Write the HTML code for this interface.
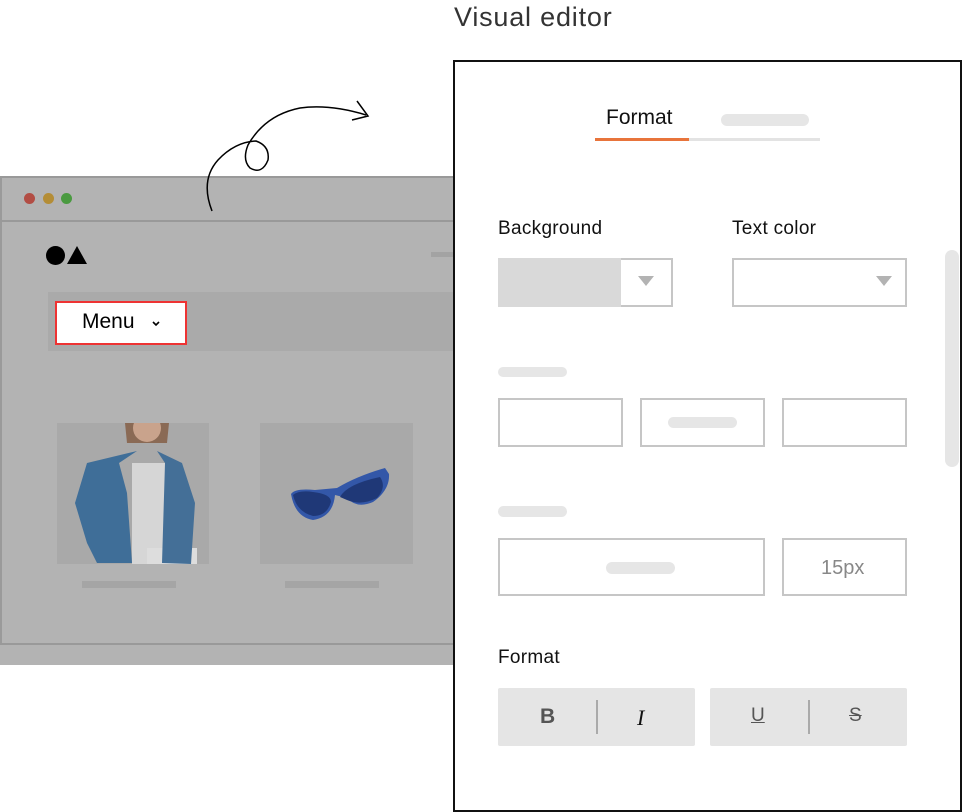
<!DOCTYPE html>
<html><head><style>
body{margin:0;width:962px;height:810px;background:#fff;position:relative;overflow:hidden;font-family:"Liberation Sans",sans-serif;}
.a{position:absolute;box-sizing:border-box;}
.pill{position:absolute;background:#e6e6e6;border-radius:6px;}
.box{position:absolute;box-sizing:border-box;border:2px solid #c6c6c6;background:#fff;}
.lbl{position:absolute;font-size:19px;color:#111;letter-spacing:0.3px;}
</style></head><body>
<!-- browser -->
<div class="a" style="left:0;top:176px;width:456px;height:489px;background:#b3b3b3;"></div>
<div class="a" style="left:0;top:176px;width:456px;height:2px;background:#999;"></div>
<div class="a" style="left:0;top:176px;width:2px;height:469px;background:#9a9a9a;"></div>
<div class="a" style="left:0;top:220px;width:456px;height:2px;background:#999;"></div>
<div class="a" style="left:0;top:643px;width:456px;height:2px;background:#999;"></div>
<div class="a" style="left:24px;top:193px;width:11px;height:11px;border-radius:50%;background:#b24d44;"></div>
<div class="a" style="left:43px;top:193px;width:11px;height:11px;border-radius:50%;background:#b48d36;"></div>
<div class="a" style="left:61px;top:193px;width:11px;height:11px;border-radius:50%;background:#4a9a40;"></div>
<div class="a" style="left:46px;top:246px;width:19px;height:19px;border-radius:50%;background:#000;"></div>
<div class="a" style="left:67px;top:246px;width:0;height:0;border-left:10px solid transparent;border-right:10px solid transparent;border-bottom:18px solid #000;"></div>
<div class="a" style="left:431px;top:252px;width:25px;height:5px;background:#a3a3a3;"></div>
<div class="a" style="left:48px;top:292px;width:408px;height:59px;background:#aaa;"></div>
<div class="a" style="left:55px;top:301px;width:132px;height:44px;background:#fff;border:2px solid #e33;"></div>
<div class="a" style="left:82px;top:310px;font-size:21px;color:#000;">Menu</div>
<svg class="a" style="left:150px;top:318px" width="12" height="10"><path d="M3 4 L6 7 L9 4" stroke="#000" stroke-width="1.6" fill="none"/></svg>
<div class="a" style="left:57px;top:423px;width:152px;height:141px;background:#a9a9a9;overflow:hidden;">
<svg width="152" height="141"><path d="M68 0 L70 20 L110 20 L112 0Z" fill="#8a6a55"/><ellipse cx="90" cy="5" rx="14" ry="14" fill="#c9a38c"/><rect x="75" y="40" width="40" height="101" fill="#d6d6d6"/><rect x="90" y="125" width="50" height="16" fill="#ddd"/><path d="M75 140 L70 70 L62 40 L80 28 L30 40 L18 80 L30 120 L40 140 Z" fill="#3f6e98"/><path d="M105 140 L108 40 L100 28 L125 40 L138 80 L134 141 Z" fill="#446f97"/></svg></div>
<div class="a" style="left:260px;top:423px;width:153px;height:141px;background:#a9a9a9;"></div>
<svg class="a" style="left:285px;top:462px" width="110" height="60"><path d="M6 32 Q10 26 30 28 L52 26 Q72 14 100 6 L104 12 Q105 28 88 40 Q72 47 62 36 L50 33 Q48 55 28 58 Q10 55 6 32Z" fill="#3357a8"/><path d="M8 33 Q14 28 28 30 Q46 32 46 40 Q42 54 28 54 Q12 50 8 33Z" fill="#1f3877"/><path d="M55 35 Q62 22 95 15 Q102 25 92 36 Q76 44 62 38Z" fill="#1f3877"/></svg>
<div class="a" style="left:82px;top:581px;width:94px;height:7px;background:#a5a5a5;"></div>
<div class="a" style="left:285px;top:581px;width:94px;height:7px;background:#a5a5a5;"></div>
<!-- arrow -->
<svg class="a" style="left:0;top:0" width="400" height="230"><path d="M212 211 Q200 180 218 160 Q235 142 256 141 Q270 146 268 160 Q262 175 250 168 Q242 160 248 145 Q265 115 300 108 Q330 104 366 115" stroke="#000" stroke-width="1.5" fill="none"/><path d="M357 101 L368 116 L352 120" stroke="#000" stroke-width="1.5" fill="none"/></svg>
<!-- panel -->
<div class="a" style="left:454px;top:2px;font-size:27px;color:#333;letter-spacing:0.8px;">Visual editor</div>
<div class="a" style="left:453px;top:60px;width:509px;height:752px;border:2px solid #111;background:#fff;"></div>
<div class="a" style="left:606px;top:106px;font-size:21px;color:#111;">Format</div>
<div class="pill" style="left:721px;top:114px;width:88px;height:12px;"></div>
<div class="a" style="left:595px;top:138px;width:94px;height:3px;background:#e8743b;"></div>
<div class="a" style="left:689px;top:138px;width:131px;height:3px;background:#e3e3e3;"></div>
<div class="lbl" style="left:498px;top:218px;">Background</div>
<div class="lbl" style="left:732px;top:218px;">Text color</div>
<div class="box" style="left:498px;top:258px;width:175px;height:49px;"></div>
<div class="a" style="left:498px;top:258px;width:123px;height:49px;background:#d9d9d9;"></div>
<div class="a" style="left:638px;top:276px;border-left:8px solid transparent;border-right:8px solid transparent;border-top:10px solid #b3b3b3;"></div>
<div class="box" style="left:732px;top:258px;width:175px;height:49px;"></div>
<div class="a" style="left:876px;top:276px;border-left:8px solid transparent;border-right:8px solid transparent;border-top:10px solid #b3b3b3;"></div>
<div class="a" style="left:945px;top:250px;width:14px;height:217px;background:#e6e6e6;border-radius:7px;"></div>
<div class="pill" style="left:498px;top:367px;width:69px;height:10px;"></div>
<div class="box" style="left:498px;top:398px;width:125px;height:49px;"></div>
<div class="box" style="left:640px;top:398px;width:125px;height:49px;"></div>
<div class="box" style="left:782px;top:398px;width:125px;height:49px;"></div>
<div class="pill" style="left:668px;top:417px;width:69px;height:11px;"></div>
<div class="pill" style="left:498px;top:506px;width:69px;height:11px;"></div>
<div class="box" style="left:498px;top:538px;width:267px;height:58px;"></div>
<div class="pill" style="left:606px;top:562px;width:69px;height:12px;"></div>
<div class="box" style="left:782px;top:538px;width:125px;height:58px;"></div>
<div class="a" style="left:821px;top:557px;font-size:20px;color:#888;">15px</div>
<div class="lbl" style="left:498px;top:647px;">Format</div>
<div class="a" style="left:498px;top:688px;width:197px;height:58px;background:#e5e5e5;border-radius:2px;"></div>
<div class="a" style="left:710px;top:688px;width:197px;height:58px;background:#e5e5e5;border-radius:2px;"></div>
<div class="a" style="left:596px;top:700px;width:2px;height:34px;background:#aaa;"></div>
<div class="a" style="left:808px;top:700px;width:2px;height:34px;background:#aaa;"></div>
<div class="a" style="left:540px;top:705px;font-size:21px;font-weight:bold;color:#555;">B</div>
<div class="a" style="left:637px;top:705px;font-size:22px;font-style:italic;font-family:'Liberation Serif',serif;color:#111;">I</div>
<div class="a" style="left:751px;top:705px;font-size:19px;color:#555;text-decoration:underline;">U</div>
<div class="a" style="left:849px;top:705px;font-size:19px;color:#555;text-decoration:line-through;">S</div>
</body></html>
